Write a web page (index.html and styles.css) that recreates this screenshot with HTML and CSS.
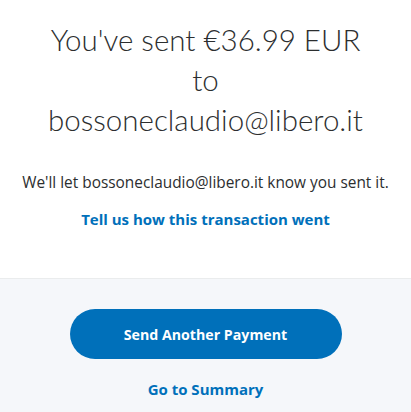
FILE: index.html
```html
<!DOCTYPE html>
<html>
<head>
<meta charset="utf-8">
<link rel="stylesheet" href="styles.css">
</head>
<body>
<main class="page">
  <section class="result">
    <h1 class="title">You've sent €36.99 EUR<br>to<br>bossoneclaudio@libero.it</h1>
    <p class="note">We'll let bossoneclaudio@libero.it know you sent it.</p>
    <a class="link" href="#">Tell us how this transaction went</a>
  </section>
  <section class="actions">
    <button class="primary" type="button">Send Another Payment</button>
    <a class="link" href="#">Go to Summary</a>
  </section>
</main>
</body>
</html>
```

FILE: styles.css
```css
html, body {
  margin: 0;
  padding: 0;
  background: #f5f7fa;
}
.page {
  font-family: "Open Sans", "Noto Sans", sans-serif;
  color: #2c2e2f;
}
.result {
  background: #ffffff;
  height: 278px;
  box-sizing: border-box;
  padding-top: 20px;
  display: flex;
  flex-direction: column;
  align-items: center;
  text-align: center;
}
.title {
  margin: 0;
  font-family: "Lato", "Open Sans", sans-serif;
  font-weight: 300;
  font-size: 29.5px;
  line-height: 40px;
  color: #2c2e2f;
}
.note {
  margin: 33px 0 0;
  font-size: 15.4px;
  line-height: 20px;
}
.link {
  display: block;
  margin-top: 16px;
  font-size: 15px;
  line-height: 20px;
  font-weight: 700;
  color: #0070ba;
  text-decoration: none;
}
.actions {
  border-top: 1px solid #eaeced;
  padding-top: 30px;
  display: flex;
  flex-direction: column;
  align-items: center;
}
.primary {
  width: 272px;
  height: 50px;
  border: none;
  border-radius: 25px;
  background: #0070ba;
  color: #fff;
  font-family: "Open Sans", "Noto Sans", sans-serif;
  font-weight: 700;
  font-size: 14.2px;
}
.actions .link {
  margin-top: 20px;
}
```
